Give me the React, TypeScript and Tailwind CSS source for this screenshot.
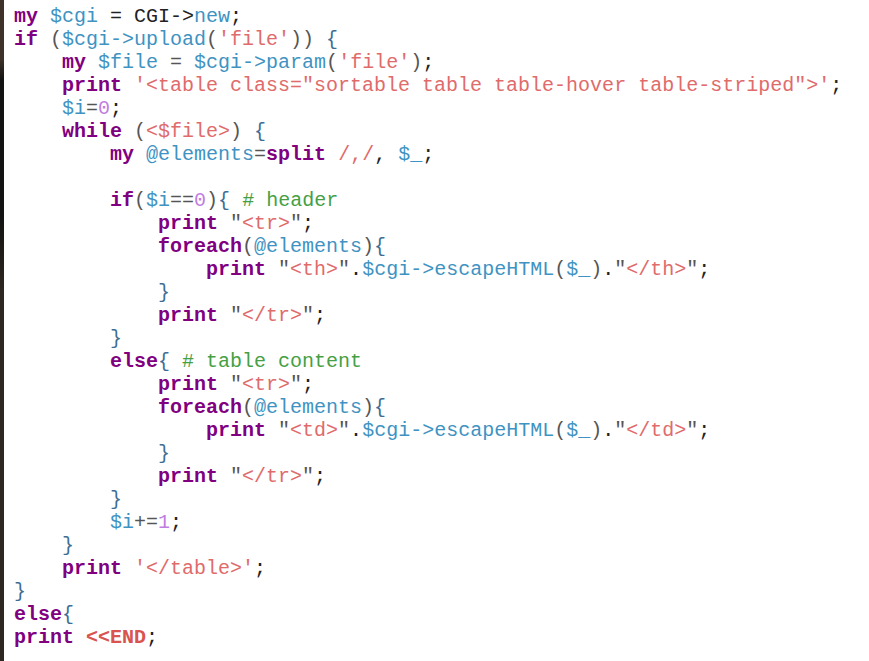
type Tok = [string, string]

const cls: Record<string, string> = {
  k: 'text-[#800080] font-bold',
  v: 'text-[#3f93c2]',
  s: 'text-[#e06b6b]',
  n: 'text-[#c07ee0]',
  c: 'text-[#45a045]',
  p: 'text-[#222]',
  o: 'text-[#555]',
  b: 'text-[#3e6d94]',
  h: 'text-[#d9534f] font-bold',
}

const ind = (n: number): Tok => [' '.repeat(n), 'p']
const dq = (inner: string): Tok[] => [['"', 'o'], [inner, 's'], ['"', 'o']]

const lines: Tok[][] = [
  [['my', 'k'], [' ', 'p'], ['$cgi', 'v'], [' = CGI->', 'p'], ['new', 'v'], [';', 'p']],
  [['if', 'k'], [' (', 'o'], ['$cgi->upload', 'v'], ['(', 'o'], ["'file'", 's'], [')) ', 'o'], ['{', 'b']],
  [ind(4), ['my', 'k'], [' ', 'p'], ['$file', 'v'], [' = ', 'o'], ['$cgi->param', 'v'], ['(', 'o'], ["'file'", 's'], [')', 'o'], [';', 'p']],
  [ind(4), ['print', 'k'], [' ', 'p'], ['\'<table class="sortable table table-hover table-striped">\'', 's'], [';', 'p']],
  [ind(4), ['$i', 'v'], ['=', 'o'], ['0', 'n'], [';', 'p']],
  [ind(4), ['while', 'k'], [' (', 'o'], ['<$file>', 's'], [') ', 'o'], ['{', 'b']],
  [ind(8), ['my', 'k'], [' ', 'p'], ['@elements', 'v'], ['=', 'o'], ['split', 'k'], [' ', 'p'], ['/,/', 's'], [', ', 'p'], ['$_', 'v'], [';', 'p']],
  [[' ', 'p']],
  [ind(8), ['if', 'k'], ['(', 'o'], ['$i', 'v'], ['==', 'o'], ['0', 'n'], [')', 'o'], ['{', 'b'], [' ', 'p'], ['# header', 'c']],
  [ind(12), ['print', 'k'], [' ', 'p'], ...dq('<tr>'), [';', 'p']],
  [ind(12), ['foreach', 'k'], ['(', 'o'], ['@elements', 'v'], [')', 'o'], ['{', 'b']],
  [ind(16), ['print', 'k'], [' ', 'p'], ...dq('<th>'), ['.', 'p'], ['$cgi->escapeHTML', 'v'], ['(', 'o'], ['$_', 'v'], [')', 'o'], ['.', 'p'], ...dq('</th>'), [';', 'p']],
  [ind(12), ['}', 'b']],
  [ind(12), ['print', 'k'], [' ', 'p'], ...dq('</tr>'), [';', 'p']],
  [ind(8), ['}', 'b']],
  [ind(8), ['else', 'k'], ['{', 'b'], [' ', 'p'], ['# table content', 'c']],
  [ind(12), ['print', 'k'], [' ', 'p'], ...dq('<tr>'), [';', 'p']],
  [ind(12), ['foreach', 'k'], ['(', 'o'], ['@elements', 'v'], [')', 'o'], ['{', 'b']],
  [ind(16), ['print', 'k'], [' ', 'p'], ...dq('<td>'), ['.', 'p'], ['$cgi->escapeHTML', 'v'], ['(', 'o'], ['$_', 'v'], [')', 'o'], ['.', 'p'], ...dq('</td>'), [';', 'p']],
  [ind(12), ['}', 'b']],
  [ind(12), ['print', 'k'], [' ', 'p'], ...dq('</tr>'), [';', 'p']],
  [ind(8), ['}', 'b']],
  [ind(8), ['$i', 'v'], ['+=', 'o'], ['1', 'n'], [';', 'p']],
  [ind(4), ['}', 'b']],
  [ind(4), ['print', 'k'], [' ', 'p'], ["'</table>'", 's'], [';', 'p']],
  [['}', 'b']],
  [['else', 'k'], ['{', 'b']],
  [['print', 'k'], [' ', 'p'], ['<<END', 'h'], [';', 'p']],
]

export default function App() {
  return (
    <div className="flex h-[661px] w-[869px] overflow-hidden bg-white">
      {/* dark window edge on the left */}
      <div className="w-[4px] shrink-0 bg-[linear-gradient(to_bottom,#3d3129_0%,#3d3129_9%,#131313_12%,#131313_33%,#2e2620_44%,#2e2620_100%)]" />
      <pre className="pl-[10px] pt-[5px] font-['Courier_New','Nimbus_Mono_PS','FreeMono','Liberation_Mono',monospace] text-[20px] leading-[23px]">
        {lines.map((line, i) => (
          <div key={i} className="whitespace-pre">
            {line.map(([t, c], j) => (
              <span key={j} className={cls[c]}>
                {t}
              </span>
            ))}
          </div>
        ))}
      </pre>
    </div>
  )
}
